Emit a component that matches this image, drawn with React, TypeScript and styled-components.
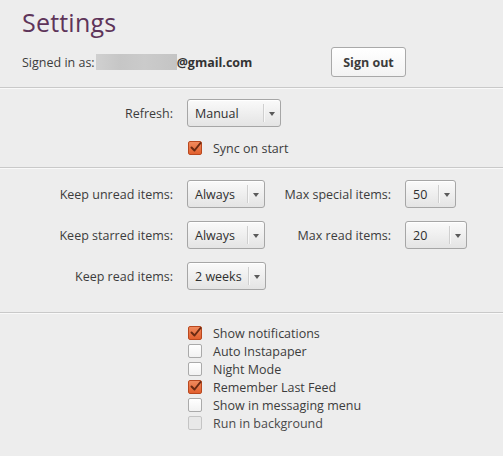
import React from "react";
import styled, { createGlobalStyle } from "styled-components";

const Global = createGlobalStyle`
  html, body { margin: 0; padding: 0; background: #ededed; }
  body { font-family: "Open Sans", "Noto Sans", "DejaVu Sans", sans-serif; }
`;

const Page = styled.div`
  width: 503px;
  height: 456px;
  background: #ededed;
  color: #3c3c3c;
  font-size: 12.5px;
  overflow: hidden;
`;

const Header = styled.div`
  padding: 6px 0 0 22px;
  height: 87px;
  box-sizing: border-box;
`;

const Title = styled.h1`
  margin: 0;
  font-weight: 400;
  font-size: 25px;
  line-height: 32px;
  color: #5e3459;
  letter-spacing: 0.2px;
`;

const SignedRow = styled.div`
  display: flex;
  align-items: center;
  margin-top: 9px;
  height: 30px;
`;

const SignedText = styled.div`
  display: flex;
  align-items: center;
  width: 309px;
`;

const Blur = styled.span`
  display: inline-block;
  width: 81px;
  height: 16px;
  margin-left: 1px;
  background: linear-gradient(90deg, #d0d0d0, #c6c6c6 30%, #cbcbcb 60%, #c4c4c4);
`;

const Email = styled.span`
  font-weight: 700;
  color: #333;
`;

const Button = styled.button`
  font-family: inherit;
  font-size: 12.5px;
  font-weight: 700;
  color: #3c3c3c;
  width: 75px;
  height: 30px;
  border: 1px solid #a9a9a9;
  border-radius: 3px;
  background: linear-gradient(#ffffff, #f3f3f3);
  box-shadow: inset 0 1px 0 #fff;
  padding: 0;
`;

const Divider = styled.div`
  height: 1px;
  background: #c9c9c9;
  border-bottom: 1px solid #f9f9f9;
`;

const Section = styled.div<{ $pt: number; $pb: number }>`
  padding-top: ${(p) => p.$pt}px;
  padding-bottom: ${(p) => p.$pb}px;
`;

const FormGrid = styled.div<{ $cols: string; $rowGap: number }>`
  display: grid;
  grid-template-columns: ${(p) => p.$cols};
  column-gap: 14px;
  row-gap: ${(p) => p.$rowGap}px;
  align-items: center;
`;

const Label = styled.div`
  text-align: right;
  white-space: nowrap;
`;

const Select = styled.div<{ $w: number }>`
  position: relative;
  width: ${(p) => p.$w}px;
  height: 28px;
  box-sizing: border-box;
  border: 1px solid #a6a6a6;
  border-radius: 3px;
  background: linear-gradient(#fafafa, #e4e4e4);
  box-shadow: inset 0 1px 0 #fff;
  display: flex;
  align-items: center;
  padding-left: 7px;
  color: #2f2f2f;
  font-size: 12.5px;
`;

const SelectSep = styled.span`
  position: absolute;
  right: 15px;
  top: 4px;
  bottom: 4px;
  width: 1px;
  background: #cfcfcf;
  border-right: 1px solid #f8f8f8;
`;

const Arrow = styled.span`
  position: absolute;
  right: 5px;
  top: 12px;
  width: 0;
  height: 0;
  border-left: 3px solid transparent;
  border-right: 3px solid transparent;
  border-top: 4px solid #5a5a5a;
`;

const CheckList = styled.div<{ $mt: number }>`
  display: flex;
  flex-direction: column;
  margin-top: ${(p) => p.$mt}px;
  padding-left: 188px;
`;

const CheckRow = styled.label<{ $disabled?: boolean }>`
  display: flex;
  align-items: center;
  height: 18px;
  color: ${(p) => (p.$disabled ? "#4a4a4a" : "#3c3c3c")};
`;

const Box = styled.span<{ $checked?: boolean; $disabled?: boolean }>`
  position: relative;
  width: 14px;
  height: 14px;
  box-sizing: border-box;
  border-radius: 2px;
  margin-right: 11px;
  flex: none;
  border: 1px solid
    ${(p) => (p.$checked ? "#b9481f" : p.$disabled ? "#c4c4c4" : "#aaaaaa")};
  background: ${(p) =>
    p.$checked
      ? "linear-gradient(#f08a5d, #e2602e)"
      : p.$disabled
      ? "#e8e8e8"
      : "linear-gradient(#ffffff, #f2f2f2)"};
`;

const Tick = styled.svg`
  position: absolute;
  left: 0px;
  top: -2px;
`;

function Dropdown({ value, w }: { value: string; w: number }) {
  return (
    <Select $w={w}>
      {value}
      <SelectSep />
      <Arrow />
    </Select>
  );
}

function Check({
  label,
  checked,
  disabled,
}: {
  label: string;
  checked?: boolean;
  disabled?: boolean;
}) {
  return (
    <CheckRow $disabled={disabled}>
      <Box $checked={checked} $disabled={disabled}>
        {checked && (
          <Tick width="14" height="14" viewBox="0 0 14 14">
            <path
              d="M2.5 7.5 L5.5 10.5 L11.5 3"
              fill="none"
              stroke="#6a2a12"
              strokeWidth="2"
              strokeLinecap="round"
              strokeLinejoin="round"
            />
          </Tick>
        )}
      </Box>
      {label}
    </CheckRow>
  );
}

export default function App() {
  return (
    <Page>
      <Global />
      <Header>
        <Title>Settings</Title>
        <SignedRow>
          <SignedText>
            Signed in as:
            <Blur />
            <Email>@gmail.com</Email>
          </SignedText>
          <Button>Sign out</Button>
        </SignedRow>
      </Header>
      <Divider />
      <Section $pt={10} $pb={10}>
        <FormGrid $cols="173px auto" $rowGap={0}>
          <Label>Refresh:</Label>
          <Dropdown value="Manual" w={94} />
        </FormGrid>
        <CheckList $mt={12}>
          <Check label="Sync on start" checked />
        </CheckList>
      </Section>
      <Divider />
      <Section $pt={11} $pb={22}>
        <FormGrid $cols="173px 79px 111px auto" $rowGap={13}>
          <Label>Keep unread items:</Label>
          <Dropdown value="Always" w={78} />
          <Label>Max special items:</Label>
          <Dropdown value="50" w={51} />
          <Label>Keep starred items:</Label>
          <Dropdown value="Always" w={78} />
          <Label>Max read items:</Label>
          <Dropdown value="20" w={62} />
          <Label>Keep read items:</Label>
          <Dropdown value="2 weeks" w={79} />
        </FormGrid>
      </Section>
      <Divider />
      <Section $pt={10} $pb={0}>
        <CheckList $mt={0}>
          <Check label="Show notifications" checked />
          <Check label="Auto Instapaper" />
          <Check label="Night Mode" />
          <Check label="Remember Last Feed" checked />
          <Check label="Show in messaging menu" />
          <Check label="Run in background" disabled />
        </CheckList>
      </Section>
    </Page>
  );
}
